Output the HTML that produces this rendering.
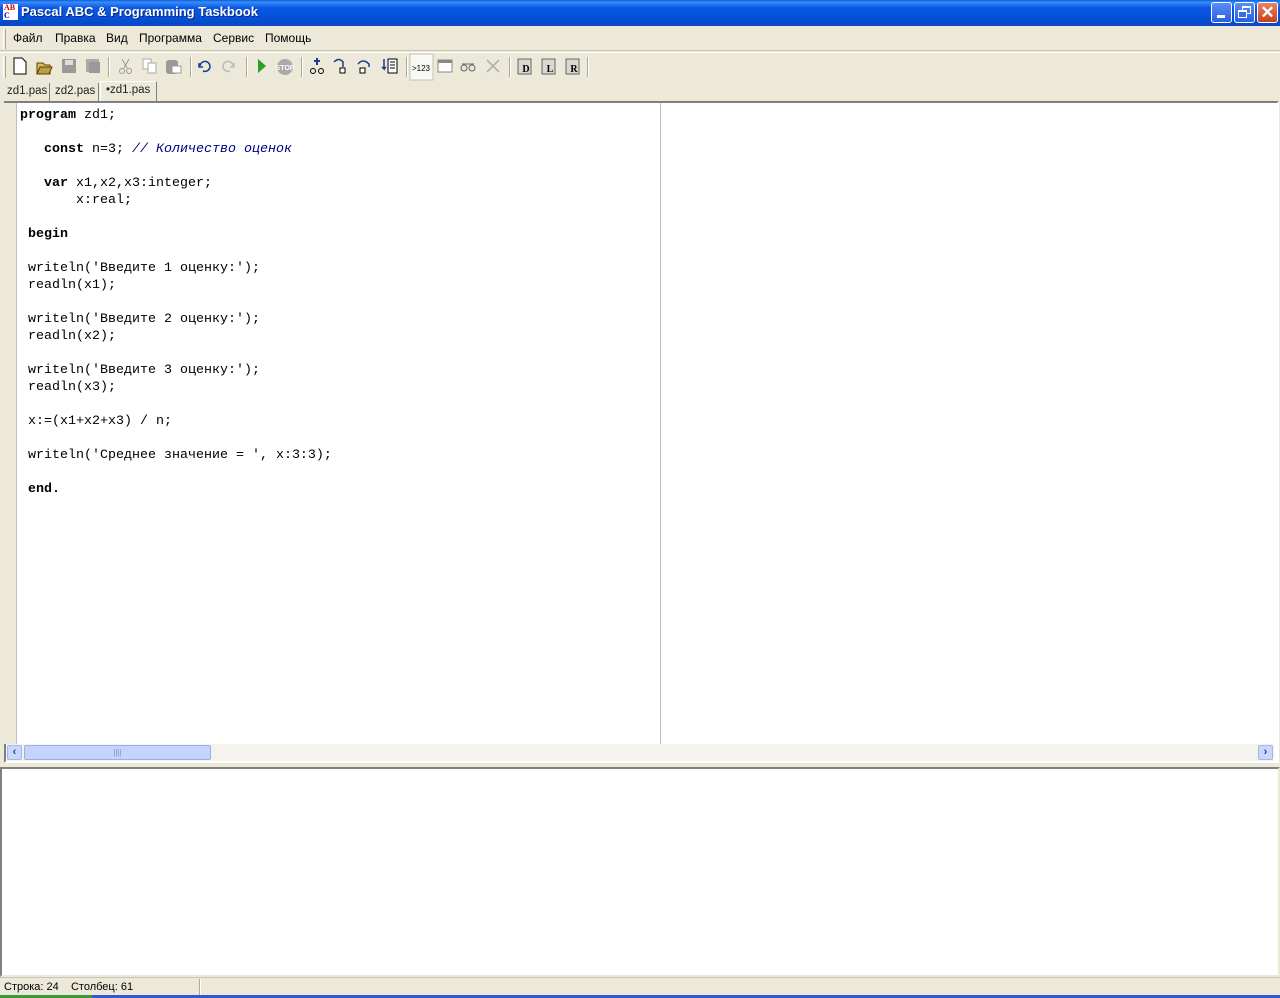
<!DOCTYPE html>
<html><head><meta charset="utf-8">
<style>
*{margin:0;padding:0;box-sizing:border-box}
body{width:1280px;height:998px;background:#ece9d8;position:relative;overflow:hidden;font-family:Tahoma,"Liberation Sans",sans-serif;font-size:12px;color:#000}
.abs{position:absolute}
#title{left:0;top:0;width:1280px;height:26px;background:linear-gradient(#0a5fe0 0%,#3a8cf6 8%,#0c58e6 30%,#0550d8 70%,#0a46c0 100%);}
#title .t{left:21px;top:4px;color:#fff;font-weight:bold;font-size:13px;font-family:"Liberation Sans",sans-serif;text-shadow:1px 1px #0a2a80}
.wb{top:2px;width:21px;height:21px;border:1px solid #fff;border-radius:3px;background:linear-gradient(#5a8cf8,#2a5ee0)}
#menu{left:0;top:26px;width:1280px;height:25px;border-bottom:1px solid #c8c4b0}
#menu span{position:absolute;top:5px;font-size:12px}
.grip{width:3px;border-left:1px solid #fff;border-right:1px solid #aca899}
#tb{left:0;top:52px;width:1280px;height:28px;border-top:1px solid #fff}
.sep{top:4px;width:2px;height:20px;border-left:1px solid #aca899;border-right:1px solid #fff}
#tabs{top:81px;left:0;width:1280px;height:21px}
.tab{position:absolute;top:2px;height:19px;border-right:1px solid #808080;font-size:11.5px;padding:2px 4px;font-family:"Liberation Sans",sans-serif;color:#222}
#ed{left:4px;top:101px;width:1275px;height:662px;border:2px solid;border-color:#808080 #fff #fff #808080;background:#fff}
#gut{left:4px;top:103px;width:13px;height:641px;background:#ece9d8;border-right:1px solid #c0c0c0}
pre{position:absolute;left:20px;top:107px;font-family:"Liberation Mono",monospace;font-size:13.33px;line-height:17px;color:#000}
pre b{font-weight:bold}
pre i{color:#000080}
#vl{left:660px;top:103px;width:1px;height:641px;background:#c0c0c0}
#hs{left:6px;top:744px;width:1268px;height:17px;background:#f4f3ee}
#out{left:0;top:767px;width:1280px;height:210px;border:2px solid;border-color:#808080 #ece9d8 #ece9d8 #808080;background:#fff}
#sb{left:0;top:977px;width:1280px;height:18px;border-top:1px solid #c8c4b0}
</style></head><body>
<div id="title" class="abs">
 <div class="abs" style="left:3px;top:4px;width:15px;height:16px;background:#fff;font:bold 8px 'Liberation Serif';color:#c00;line-height:8px;padding-left:1px">AB<br><span style="color:#008">C</span></div>
 <div class="abs t">Pascal ABC &amp; Programming Taskbook</div>
 <div class="abs wb" style="left:1211px"><div class="abs" style="left:5px;top:12px;width:8px;height:3px;background:#fff"></div></div>
 <div class="abs wb" style="left:1234px"><div class="abs" style="left:7px;top:3px;width:9px;height:8px;border:1px solid #fff;border-top-width:2px"></div><div class="abs" style="left:3px;top:7px;width:9px;height:8px;border:1px solid #fff;border-top-width:2px;background:#3a6ce8"></div></div>
 <div class="abs wb" style="left:1257px;background:linear-gradient(#e8846a,#c8401c);color:#fff;font:bold 17px 'Liberation Sans';text-align:center;line-height:19px">✕</div>
</div>
<div id="menu" class="abs">
 <div class="abs grip" style="left:3px;top:3px;height:20px"></div>
 <span style="left:13px">Файл</span><span style="left:55px">Правка</span><span style="left:106px">Вид</span><span style="left:139px">Программа</span><span style="left:213px">Сервис</span><span style="left:265px">Помощь</span>
</div>
<div id="tb" class="abs">
 <div class="abs grip" style="left:3px;top:3px;height:22px"></div>
 <svg class="abs" style="left:0;top:0" width="600" height="28">
  <path d="M14 5h8l4 4v12H14z" fill="#fff" stroke="#000"/>
  <path d="M37 10h6l2 2h5v9H37z" fill="#d8c060" stroke="#604000"/><path d="M37 21l3-7h12l-3 7z" fill="#b8a040" stroke="#604000"/>
  <rect x="62" y="6" width="14" height="14" fill="#999"/><rect x="65" y="7" width="8" height="5" fill="#ddd"/>
  <rect x="86" y="6" width="13" height="13" fill="#aaa"/><rect x="89" y="9" width="11" height="11" fill="#999"/>
  <path d="M122 6l5 9M129 6l-5 9" stroke="#999"/><circle cx="122" cy="18" r="2.5" fill="none" stroke="#999"/><circle cx="129" cy="18" r="2.5" fill="none" stroke="#999"/>
  <rect x="143" y="6" width="8" height="10" fill="#fff" stroke="#aaa"/><rect x="148" y="10" width="8" height="10" fill="#fff" stroke="#aaa"/>
  <rect x="166" y="7" width="12" height="14" rx="3" fill="#999"/><rect x="172" y="13" width="9" height="7" fill="#fff" stroke="#999"/>
  <path d="M200 13a5 5 0 1 1 3 5M199 10v4h4" fill="none" stroke="#1a3a9a" stroke-width="1.5"/>
  <path d="M233 13a5 5 0 1 0-3 5M234 10v4h-4" fill="none" stroke="#bbb" stroke-width="1.5"/>
  <path d="M258 6l8 7-8 7z" fill="#2aa02a"/>
  <circle cx="285" cy="14" r="8" fill="#aaa"/><text x="285" y="17" font-size="7" fill="#fff" text-anchor="middle" font-family="Liberation Sans" font-weight="bold">STOP</text>
  <path d="M317 5v7M314 8h6" stroke="#1a3a9a" stroke-width="2"/><circle cx="313" cy="18" r="2.5" fill="none" stroke="#000"/><circle cx="321" cy="18" r="2.5" fill="none" stroke="#000"/>
  <path d="M334 9q5-5 9 0v5" fill="none" stroke="#1a3a9a" stroke-width="1.5"/><rect x="340" y="15" width="5" height="5" fill="#fff" stroke="#000"/>
  <path d="M358 11q5-6 11 0v3" fill="none" stroke="#1a3a9a" stroke-width="1.5"/><rect x="360" y="15" width="5" height="5" fill="#fff" stroke="#000"/>
  <path d="M384 6v10l-2-2M384 16l2-2" stroke="#1a3a9a" stroke-width="1.5" fill="none"/><rect x="388" y="6" width="9" height="14" fill="#fff" stroke="#000"/><path d="M390 9h5M390 12h5M390 15h5" stroke="#000"/>
  <rect x="410" y="1" width="23" height="26" fill="#f8f8f4" stroke="#c8c4b0"/><text x="421" y="18" font-size="8" text-anchor="middle" font-family="Liberation Sans">&gt;123</text>
  <rect x="438" y="7" width="14" height="12" fill="#fff" stroke="#888"/><rect x="438" y="7" width="14" height="3" fill="#888"/>
  <circle cx="464" cy="15" r="3" fill="none" stroke="#666"/><circle cx="472" cy="15" r="3" fill="none" stroke="#666"/><path d="M462 11h12" stroke="#666"/>
  <path d="M487 7l12 12M499 7l-12 12" stroke="#aaa" stroke-width="1.5"/>
  <rect x="518" y="6" width="13" height="15" fill="#d8d8d0" stroke="#666"/><text x="526" y="19" font-size="10" font-weight="bold" text-anchor="middle" font-family="Liberation Serif">D</text>
  <rect x="542" y="6" width="13" height="15" fill="#d8d8d0" stroke="#666"/><text x="550" y="19" font-size="10" font-weight="bold" text-anchor="middle" font-family="Liberation Serif">L</text>
  <rect x="566" y="6" width="13" height="15" fill="#d8d8d0" stroke="#666"/><text x="574" y="19" font-size="10" font-weight="bold" text-anchor="middle" font-family="Liberation Serif">R</text>
 </svg>
 <div class="abs sep" style="left:108px"></div><div class="abs sep" style="left:190px"></div><div class="abs sep" style="left:246px"></div><div class="abs sep" style="left:301px"></div><div class="abs sep" style="left:406px"></div><div class="abs sep" style="left:509px"></div><div class="abs sep" style="left:587px"></div>
</div>
<div id="tabs" class="abs">
 <div class="tab" style="left:3px;width:47px">zd1.pas</div>
 <div class="tab" style="left:51px;width:48px">zd2.pas</div>
 <div class="tab" style="left:100px;top:0;height:21px;width:57px;background:#ece9d8;border-left:1px solid #fff;border-top:1px solid #fff;padding-left:5px">•zd1.pas</div>
</div>
<div id="ed" class="abs"></div>
<div id="gut" class="abs"></div>
<div id="vl" class="abs"></div>
<pre><b>program</b> zd1;

   <b>const</b> n=3; <i>// Количество оценок</i>

   <b>var</b> x1,x2,x3:integer;
       x:real;

 <b>begin</b>

 writeln('Введите 1 оценку:');
 readln(x1);

 writeln('Введите 2 оценку:');
 readln(x2);

 writeln('Введите 3 оценку:');
 readln(x3);

 x:=(x1+x2+x3) / n;

 writeln('Среднее значение = ', x:3:3);

 <b>end.</b></pre>
<div id="hs" class="abs">
 <div class="abs" style="left:1px;top:1px;width:15px;height:15px;background:#c8d8fc;border:1px solid #a0b8ec;border-radius:2px;color:#2a3a7a;font:bold 11px 'Liberation Sans';text-align:center;line-height:13px">‹</div>
 <div class="abs" style="left:18px;top:1px;width:187px;height:15px;background:#c4d4fc;border:1px solid #98b0e8;border-radius:2px;text-align:center;font-size:8px;color:#8090c0;line-height:13px">||||</div>
 <div class="abs" style="left:1252px;top:1px;width:15px;height:15px;background:#c8d8fc;border:1px solid #a0b8ec;border-radius:2px;color:#2a3a7a;font:bold 11px 'Liberation Sans';text-align:center;line-height:13px">›</div>
</div>
<div id="out" class="abs"></div>
<div id="sb" class="abs">
 <div class="abs" style="left:4px;top:3px;font-size:11px">Строка: 24&nbsp;&nbsp;&nbsp; Столбец: 61</div>
 <div class="abs" style="left:199px;top:1px;width:2px;height:16px;border-left:1px solid #aca899;border-right:1px solid #fff"></div>
</div>
<div class="abs" style="left:0;top:995px;width:1280px;height:3px;background:#2a5ad8"></div>
<div class="abs" style="left:0;top:995px;width:92px;height:3px;background:#3a9a3a"></div>
</body></html>
